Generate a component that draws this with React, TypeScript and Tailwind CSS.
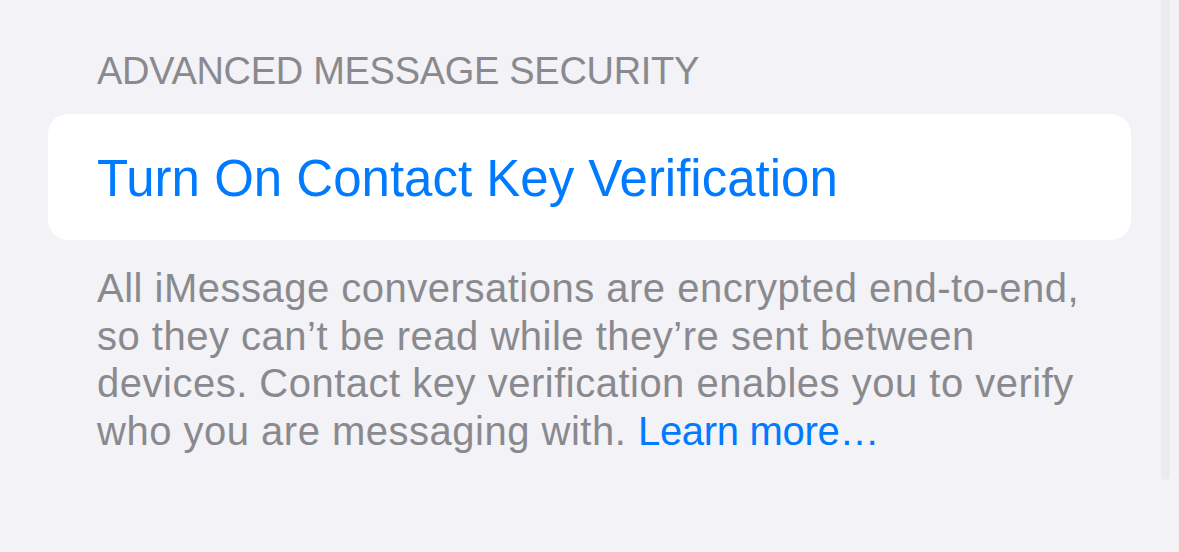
export default function App() {
  return (
    <div className="relative min-h-[552px] w-full overflow-hidden bg-[#f2f2f7] font-['Liberation_Sans',Arial,sans-serif]">
      {/* scroll indicator */}
      <div className="absolute right-[9px] top-0 h-[480px] w-[9px] rounded-b-full bg-[#ebebf0]"></div>

      <div className="px-[48px] pt-[48px]">
        {/* ── SECTION HEADER ── */}
        <h2 className="px-[49px] text-[38px] leading-[46px] tracking-[-0.3px] text-[#8a8a8e]">
          ADVANCED MESSAGE SECURITY
        </h2>

        {/* ── CARD ── */}
        <div className="mt-[20px] rounded-[20px] bg-white px-[49px] pt-[35px] pb-[31px]">
          <button className="text-left text-[51px] leading-[60px] text-[#007aff]">
            Turn On Contact Key Verification
          </button>
        </div>

        {/* ── FOOTER ── */}
        <p className="mt-[25px] px-[49px] text-[40px] leading-[47.5px] tracking-[0.5px] text-[#8a8a8e]">
          All iMessage conversations are encrypted end-to-end,
          <br />
          so they can’t be read while they’re sent between
          <br />
          devices. Contact key verification enables you to verify
          <br />
          who you are messaging with.{" "}
          <span className="tracking-[-0.3px] text-[#007aff]">Learn more…</span>
        </p>
      </div>
    </div>
  );
}
